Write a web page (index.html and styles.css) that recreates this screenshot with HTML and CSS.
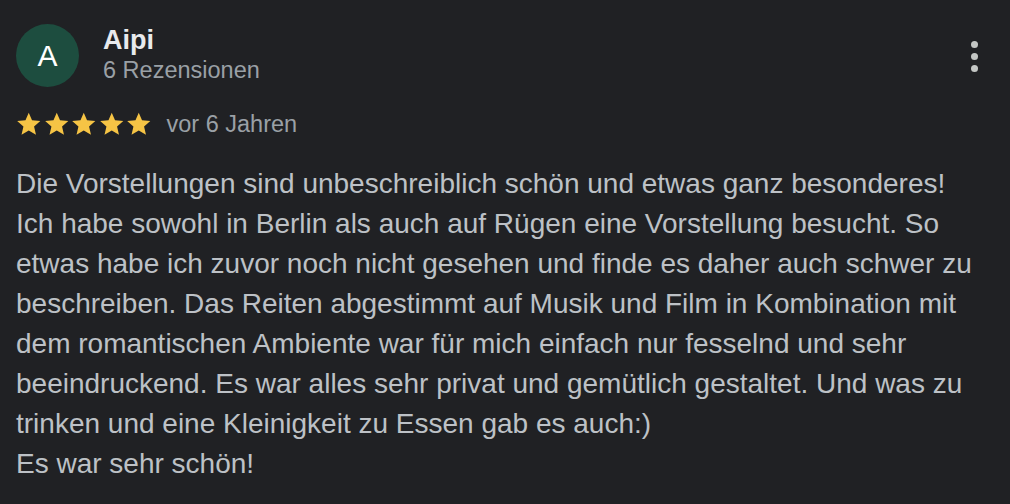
FILE: index.html
```html
<!DOCTYPE html>
<html lang="de">
<head>
<meta charset="utf-8">
<link rel="stylesheet" href="styles.css">
</head>
<body>
<div class="review">
  <div class="header">
    <div class="avatar">A</div>
    <div class="who">
      <div class="name">Aipi</div>
      <div class="count">6 Rezensionen</div>
    </div>
    <div class="menu" aria-label="Mehr">
      <span class="dot"></span><span class="dot"></span><span class="dot"></span>
    </div>
  </div>
  <div class="rating">
    <div class="stars">
      <svg viewBox="0 0 24 24" class="star"><path d="M12 1.6l3.1 7.2 7.8.7-5.9 5.2 1.8 7.7L12 18.3l-6.8 4.1 1.8-7.7-5.9-5.2 7.8-.7z"/></svg>
      <svg viewBox="0 0 24 24" class="star"><path d="M12 1.6l3.1 7.2 7.8.7-5.9 5.2 1.8 7.7L12 18.3l-6.8 4.1 1.8-7.7-5.9-5.2 7.8-.7z"/></svg>
      <svg viewBox="0 0 24 24" class="star"><path d="M12 1.6l3.1 7.2 7.8.7-5.9 5.2 1.8 7.7L12 18.3l-6.8 4.1 1.8-7.7-5.9-5.2 7.8-.7z"/></svg>
      <svg viewBox="0 0 24 24" class="star"><path d="M12 1.6l3.1 7.2 7.8.7-5.9 5.2 1.8 7.7L12 18.3l-6.8 4.1 1.8-7.7-5.9-5.2 7.8-.7z"/></svg>
      <svg viewBox="0 0 24 24" class="star"><path d="M12 1.6l3.1 7.2 7.8.7-5.9 5.2 1.8 7.7L12 18.3l-6.8 4.1 1.8-7.7-5.9-5.2 7.8-.7z"/></svg>
    </div>
    <span class="date">vor 6 Jahren</span>
  </div>
  <p class="text">Die Vorstellungen sind unbeschreiblich schön und etwas ganz besonderes! Ich habe sowohl in Berlin als auch auf Rügen eine Vorstellung besucht. So etwas habe ich zuvor noch nicht gesehen und finde es daher auch schwer zu beschreiben. Das Reiten abgestimmt auf Musik und Film in Kombination mit dem romantischen Ambiente war für mich einfach nur fesselnd und sehr beeindruckend. Es war alles sehr privat und gemütlich gestaltet. Und was zu trinken und eine Kleinigkeit zu Essen gab es auch:)<br>Es war sehr schön!</p>
</div>
</body>
</html>
```

FILE: styles.css
```css
html, body {
  margin: 0;
  padding: 0;
  background: #202124;
  width: 1010px;
  height: 504px;
  overflow: hidden;
}
body {
  font-family: "Liberation Sans", Arial, sans-serif;
}
.review {
  padding: 24px 16px 0 16px;
}
.header {
  display: flex;
  align-items: flex-start;
}
.avatar {
  width: 63px;
  height: 63px;
  border-radius: 50%;
  background: #1d4d3f;
  color: #ffffff;
  font-size: 30px;
  display: flex;
  align-items: center;
  justify-content: center;
  flex: none;
}
.who {
  margin-left: 24px;
  margin-top: 1px;
  flex: 1;
}
.name {
  color: #e8eaed;
  font-weight: bold;
  font-size: 27px;
  line-height: 30px;
}
.count {
  color: #9aa0a6;
  font-size: 23.5px;
  line-height: 30px;
}
.menu {
  display: flex;
  flex-direction: column;
  gap: 5px;
  margin-top: 17px;
  margin-right: 16px;
}
.dot {
  width: 7px;
  height: 7px;
  border-radius: 50%;
  background: #c4c7c5;
}
.rating {
  display: flex;
  align-items: center;
  margin-top: 22px;
  height: 30px;
}
.stars {
  display: flex;
  gap: 2px;
}
.star {
  width: 25.5px;
  height: 25.5px;
  fill: #f6c445;
  display: block;
}
.date {
  margin-left: 15px;
  color: #9aa0a6;
  font-size: 23.5px;
}
.text {
  margin: 25px 0 0 0;
  color: #bdc1c6;
  font-size: 28px;
  line-height: 40px;
  width: 970px;
}
```
